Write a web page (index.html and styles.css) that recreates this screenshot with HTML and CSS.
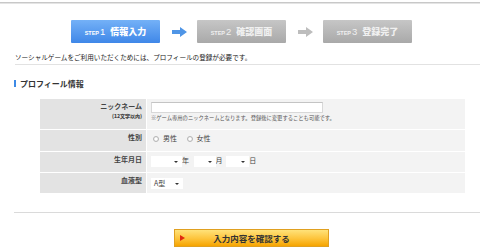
FILE: index.html
```html
<!DOCTYPE html>
<html lang="ja">
<head>
<meta charset="utf-8">
<title>プロフィール登録</title>
<link rel="stylesheet" href="styles.css">
</head>
<body>
<div class="topLine"></div>

<div class="steps">
  <div class="step current"><span class="stepNo"><small>STEP</small>1</span>情報入力</div>
  <svg class="stepArrow" width="15" height="10" viewBox="0 0 15 10"><path d="M0 3h8V0l7 5-7 5V7H0z" fill="#4f95e6"/></svg>
  <div class="step"><span class="stepNo"><small>STEP</small>2</span>確認画面</div>
  <svg class="stepArrow" width="15" height="10" viewBox="0 0 15 10"><path d="M0 3h8V0l7 5-7 5V7H0z" fill="#bdbdbd"/></svg>
  <div class="step"><span class="stepNo"><small>STEP</small>3</span>登録完了</div>
</div>

<p class="intro">ソーシャルゲームをご利用いただくためには、プロフィールの登録が必要です。</p>

<h2 class="sectionTitle">プロフィール情報</h2>

<form class="profileForm">
  <div class="label">ニックネーム<br><b class="sub">(12文字以内)</b></div>
  <div class="value">
    <input type="text" class="nickName">
    <div class="note">※ゲーム専用のニックネームとなります。登録後に変更することも可能です。</div>
  </div>

  <div class="label">性別</div>
  <div class="value">
    <label class="radio"><input type="radio" name="sex">男性</label>
    <label class="radio"><input type="radio" name="sex">女性</label>
  </div>

  <div class="label">生年月日</div>
  <div class="value">
    <span class="sel selYear"><i></i></span>年
    <span class="sel selMonth"><i></i></span>月
    <span class="sel selDay"><i></i></span>日
  </div>

  <div class="label">血液型</div>
  <div class="value">
    <span class="sel selBlood">A型<i></i></span>
  </div>
</form>

<div class="bottomLine"></div>

<div class="submitRow">
  <button type="button" class="submitBtn">入力内容を確認する</button>
</div>
</body>
</html>
```

FILE: styles.css
```css
body {margin:0; font-family:"Noto Sans CJK JP", "Liberation Sans", sans-serif; color:#333; background:#fff;}

.topLine {margin-top:2px; border-top:1px solid #c8c8c8; height:1px; background:#e4e4e4;}

.steps {display:flex; align-items:center; margin:16px 0 0 71px; height:23px;}
.step {width:89px; height:23px; display:flex; align-items:center; justify-content:center; gap:5px; font-size:9px; font-weight:900; color:#f0f0f0; background:linear-gradient(#c6c6c6, #a9a9a9); border-radius:1px;}
.step.current {color:#fff; background:linear-gradient(#74b1f7, #3f87e8);}
.stepNo {font-size:9.5px; font-weight:normal; font-family:"Liberation Sans", sans-serif;}
.stepNo small {font-size:5.5px; font-weight:bold; margin-right:1px;}
.stepArrow {margin:0 10px 0 12px;}

.intro {margin:9px 0 0 15px; padding-bottom:2px; font-size:6.6px; line-height:10px; color:#222; border-bottom:1px solid #e2e2e2;}

.sectionTitle {margin:15px 0 0 14px; padding-left:4px; border-left:2px solid #3d8ae6; font-size:8px; line-height:7px; color:#333;}

.profileForm {display:grid; grid-template-columns:106px 318px; grid-template-rows:30px 21px 20px 20px; gap:1px; margin:12px 0 0 40px; width:425px;}
.label {background:#e3e3e3; text-align:right; padding:3px 4px 0 0; font-size:7px; line-height:9px; font-weight:bold; color:#444;}
.label .sub {font-size:5px; line-height:8px;}
.value {background:#f3f3f3; padding:3px 0 0 4px; font-size:7px; line-height:11px; color:#444;}

.nickName {display:block; width:172px; height:11px; box-sizing:border-box; margin:0; border:1px solid #d8d8d8; border-top-color:#c4c4c4; background:#fff;}
.note {font-size:5.3px; line-height:8px; margin-top:1px; color:#555;}

.radio {margin-right:6px;}
.radio input {appearance:none; width:6px; height:6px; margin:0 4px 0 2px; vertical-align:-1px; border:1px solid #b4b4b4; border-radius:50%; background:radial-gradient(#fff 30%, #e0e0e0);}

.sel {display:inline-block; position:relative; height:11px; background:#fff; vertical-align:top; margin-top:1px; box-sizing:border-box; padding-left:3px; font-size:7px; line-height:11px;}
.sel i {position:absolute; right:4px; top:5px; border-left:2px solid transparent; border-right:2px solid transparent; border-top:2px solid #333;}
.selYear {width:31px;}
.selMonth {width:22px; margin-left:3px;}
.selDay {width:23px; margin-left:2px;}
.selBlood {width:32px; margin-top:2px;}

.bottomLine {margin:19px 0 0 14px; border-top:1px solid #dadada;}

.submitRow {display:flex; justify-content:flex-start; margin:16px 0 0 174px;}
.submitBtn {position:relative; width:155px; height:18px; padding:0; border:1px solid #e0a020; background:linear-gradient(#ffe27a, #fdc33a 55%, #f6a400); font-family:"Noto Sans CJK JP", sans-serif; font-size:8.5px; font-weight:bold; color:#333; text-align:center; line-height:16px;}
.submitBtn::before {content:""; position:absolute; left:5px; top:5px; border-top:3px solid transparent; border-bottom:3px solid transparent; border-left:5px solid #e02a10;}
```
